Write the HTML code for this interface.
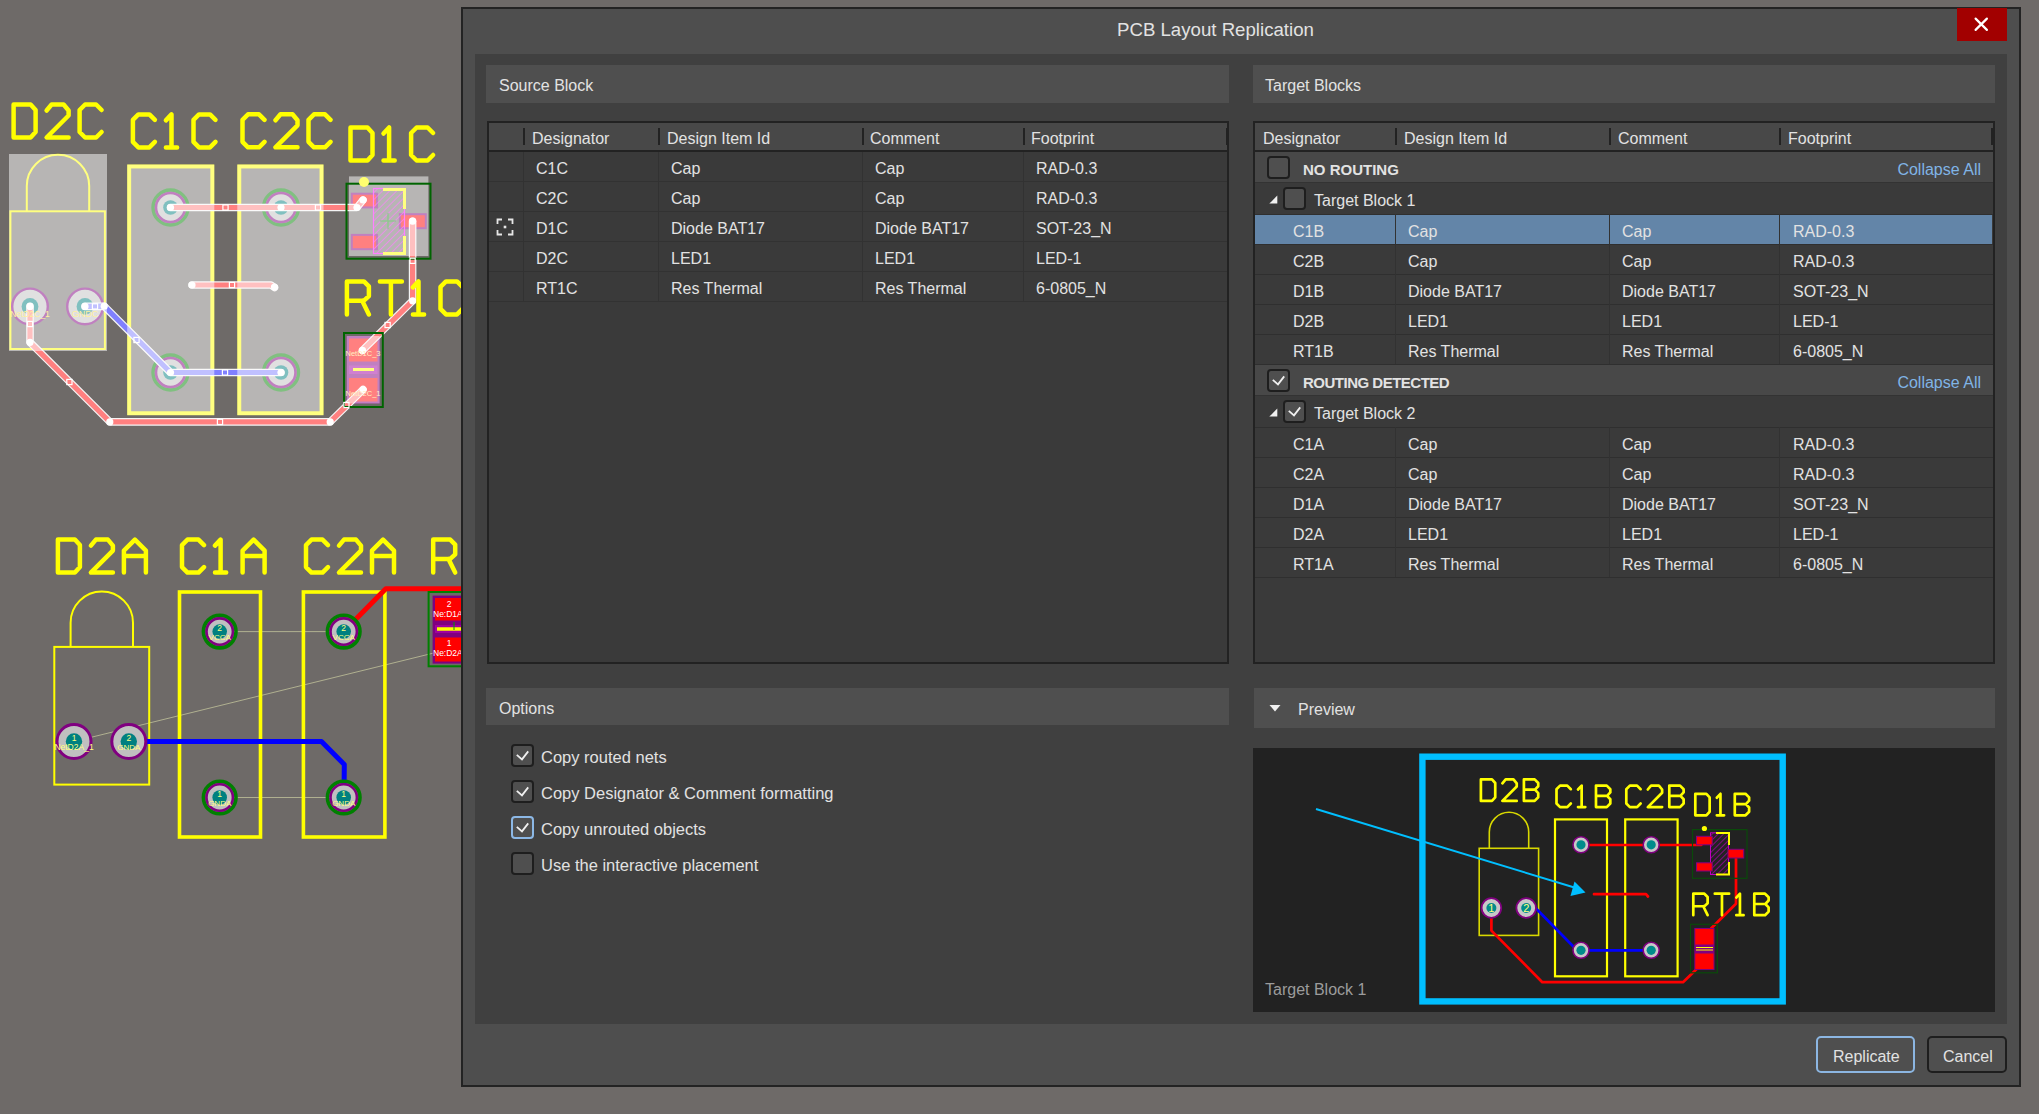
<!DOCTYPE html><html><head><meta charset="utf-8"><style>
*{box-sizing:border-box;margin:0;padding:0}
html,body{width:2039px;height:1114px;overflow:hidden;background:#6e6a68;font-family:"Liberation Sans",sans-serif;color:#e2e2e2}
.a{position:absolute}
.t{position:absolute;white-space:nowrap;font-size:16px;line-height:20px}
.hdr{position:absolute;background:#4f4f4f}
.tbl{position:absolute;background:#3a3a3a;border:2px solid #222}
.cb{position:absolute;width:23px;height:23px;border:2px solid #1e1e1e;border-radius:4px;background:#4f4f4f}
.cb svg{position:absolute;left:-2px;top:-2px}
.btn{position:absolute;height:37px;border:2px solid #1e1e1e;border-radius:5px;background:#4f4f4f}
</style></head><body>
<svg class="a" style="left:0;top:0" width="462" height="1114">
<rect x="10.4" y="211.3" width="94.5" height="137.7" fill="none" stroke="#ffff00" stroke-width="2"/>
<path d="M26.8 211 V186 A31.2 31.2 0 0 1 89.2 186 V211" fill="none" stroke="#ffff00" stroke-width="2"/>
<rect x="129.2" y="166.5" width="83.1" height="246.7" fill="none" stroke="#ffff00" stroke-width="3.9"/>
<rect x="239.3" y="166.5" width="82.2" height="246.7" fill="none" stroke="#ffff00" stroke-width="3.9"/>
<circle cx="30" cy="306.4" r="17.8" fill="#c0c0c0" stroke="#800080" stroke-width="2.4"/><circle cx="30" cy="306.4" r="8.4" fill="#008080"/>
<circle cx="85" cy="306.4" r="17.8" fill="#c0c0c0" stroke="#800080" stroke-width="2.4"/><circle cx="85" cy="306.4" r="8.4" fill="#008080"/>
<circle cx="170.5" cy="207.5" r="17.5" fill="none" stroke="#008000" stroke-width="3.4"/><circle cx="170.5" cy="207.5" r="14.5" fill="#c0c0c0" stroke="#800080" stroke-width="2.6"/><circle cx="170.5" cy="207.5" r="7.3" fill="#008080"/>
<circle cx="170.5" cy="372.5" r="17.5" fill="none" stroke="#008000" stroke-width="3.4"/><circle cx="170.5" cy="372.5" r="14.5" fill="#c0c0c0" stroke="#800080" stroke-width="2.6"/><circle cx="170.5" cy="372.5" r="7.3" fill="#008080"/>
<circle cx="281" cy="207.5" r="17.5" fill="none" stroke="#008000" stroke-width="3.4"/><circle cx="281" cy="207.5" r="14.5" fill="#c0c0c0" stroke="#800080" stroke-width="2.6"/><circle cx="281" cy="207.5" r="7.3" fill="#008080"/>
<circle cx="281" cy="372.5" r="17.5" fill="none" stroke="#008000" stroke-width="3.4"/><circle cx="281" cy="372.5" r="14.5" fill="#c0c0c0" stroke="#800080" stroke-width="2.6"/><circle cx="281" cy="372.5" r="7.3" fill="#008080"/>
<rect x="351.8" y="193.7" width="25.19999999999999" height="13.700000000000017" fill="#ff0000" stroke="#800080" stroke-width="2"/>
<rect x="351.8" y="234.9" width="25.19999999999999" height="14.299999999999983" fill="#ff0000" stroke="#800080" stroke-width="2"/>
<rect x="399.9" y="214.2" width="25.900000000000034" height="14.0" fill="#ff0000" stroke="#800080" stroke-width="2"/>
<defs><pattern id="hatch" width="5" height="5" patternUnits="userSpaceOnUse" patternTransform="rotate(45)"><rect width="5" height="5" fill="none"/><line x1="0" y1="0" x2="0" y2="5" stroke="#ff00ff" stroke-width="1.3"/></pattern><pattern id="hatch2" width="4" height="4" patternUnits="userSpaceOnUse" patternTransform="rotate(45)"><line x1="0" y1="0" x2="0" y2="4" stroke="#c000c0" stroke-width="1.2"/></pattern></defs>
<rect x="373.5" y="188.5" width="31" height="65" fill="url(#hatch)" stroke="#ff00ff" stroke-width="1.2"/>
<path d="M383 189.5 H404.5 V209 M383 253.5 H404.5 V236" fill="none" stroke="#ffff00" stroke-width="3"/>
<path d="M380 221 H396 M388 213 V229" stroke="#00a000" stroke-width="1"/>
<rect x="346.7" y="336" width="33" height="67.5" fill="#800080"/>
<rect x="349" y="338.5" width="28.5" height="23" fill="#ff0000"/>
<rect x="349" y="378" width="28.5" height="23.5" fill="#ff0000"/>
<rect x="349" y="365.5" width="28.5" height="8.5" fill="#a000a0"/>
<path d="M353 369.5 H374" stroke="#ffff00" stroke-width="3"/>
<path d="M170.5 207.5 L357 207.5 L363 200" fill="none" stroke="#f4f4f4" stroke-width="7.6" stroke-linejoin="round" stroke-linecap="round" />
<path d="M192 285 L271 285 L274.5 287.5" fill="none" stroke="#f4f4f4" stroke-width="7.6" stroke-linejoin="round" stroke-linecap="round" />
<path d="M30 306.4 L30 342.3 L109.8 421.9 L330.2 421.9 L363 389.6" fill="none" stroke="#f4f4f4" stroke-width="7.6" stroke-linejoin="round" stroke-linecap="round" />
<path d="M412.6 221.2 L412.6 300.8 L362.5 350.4" fill="none" stroke="#f4f4f4" stroke-width="7.6" stroke-linejoin="round" stroke-linecap="round" />
<path d="M85 306.4 L104.2 306.2 L170.5 372.5 L281 372.5" fill="none" stroke="#f4f4f4" stroke-width="7.6" stroke-linejoin="round" stroke-linecap="round" />
<path d="M170.5 207.5 L357 207.5 L363 200" fill="none" stroke="#ff8080" stroke-width="5.2" stroke-linejoin="round" stroke-linecap="round" />
<path d="M192 285 L271 285 L274.5 287.5" fill="none" stroke="#ff8080" stroke-width="5.2" stroke-linejoin="round" stroke-linecap="round" />
<path d="M30 306.4 L30 342.3 L109.8 421.9 L330.2 421.9 L363 389.6" fill="none" stroke="#ff8080" stroke-width="5.2" stroke-linejoin="round" stroke-linecap="round" />
<path d="M412.6 221.2 L412.6 300.8 L362.5 350.4" fill="none" stroke="#ff8080" stroke-width="5.2" stroke-linejoin="round" stroke-linecap="round" />
<path d="M85 306.4 L104.2 306.2 L170.5 372.5 L281 372.5" fill="none" stroke="#8080ff" stroke-width="5.2" stroke-linejoin="round" stroke-linecap="round" />
<rect x="9" y="154" width="98" height="197" fill="#ffffff" opacity="0.5"/>
<rect x="127.2" y="164.5" width="87.10000000000001" height="250.7" fill="#ffffff" opacity="0.5"/>
<rect x="237.3" y="164.5" width="86.19999999999999" height="250.7" fill="#ffffff" opacity="0.5"/>
<rect x="349" y="176.4" width="79.39999999999998" height="79.6" fill="#ffffff" opacity="0.5"/>
<rect x="346.7" y="336" width="33.0" height="67.5" fill="#ffffff" opacity="0.5"/>
<rect x="346.5" y="183.7" width="84" height="75" fill="none" stroke="#006400" stroke-width="2"/>
<rect x="344" y="333" width="38.8" height="74" fill="none" stroke="#006400" stroke-width="2"/>
<circle cx="364" cy="182" r="5" fill="#ffff70"/>
<circle cx="170.5" cy="207.5" r="3.6" fill="#ffffff"/>
<circle cx="281" cy="207.5" r="3.6" fill="#ffffff"/>
<circle cx="357" cy="207.5" r="3.6" fill="#ffffff"/>
<circle cx="363" cy="200" r="3.6" fill="#ffffff"/>
<circle cx="192" cy="285" r="3.6" fill="#ffffff"/>
<circle cx="274.5" cy="287" r="3.6" fill="#ffffff"/>
<circle cx="30" cy="306.4" r="3.6" fill="#ffffff"/>
<circle cx="30" cy="342.3" r="3.6" fill="#ffffff"/>
<circle cx="109.8" cy="421.9" r="3.6" fill="#ffffff"/>
<circle cx="330.2" cy="421.9" r="3.6" fill="#ffffff"/>
<circle cx="363" cy="389.6" r="3.6" fill="#ffffff"/>
<circle cx="412.6" cy="221.2" r="3.6" fill="#ffffff"/>
<circle cx="412.6" cy="300.8" r="3.6" fill="#ffffff"/>
<circle cx="362.5" cy="350.4" r="3.6" fill="#ffffff"/>
<circle cx="85" cy="306.4" r="3.6" fill="#ffffff"/>
<circle cx="104.2" cy="306.2" r="3.6" fill="#ffffff"/>
<circle cx="170.5" cy="372.5" r="3.6" fill="#ffffff"/>
<circle cx="281" cy="372.5" r="3.6" fill="#ffffff"/>
<rect x="222.9" y="204.9" width="5.2" height="5.2" fill="none" stroke="#ffffff" stroke-width="1.2"/>
<rect x="315.4" y="204.9" width="5.2" height="5.2" fill="none" stroke="#ffffff" stroke-width="1.2"/>
<rect x="229.4" y="282.4" width="5.2" height="5.2" fill="none" stroke="#ffffff" stroke-width="1.2"/>
<rect x="27.4" y="321.4" width="5.2" height="5.2" fill="none" stroke="#ffffff" stroke-width="1.2"/>
<rect x="66.80000000000001" y="379.4" width="5.2" height="5.2" fill="none" stroke="#ffffff" stroke-width="1.2"/>
<rect x="217.4" y="419.29999999999995" width="5.2" height="5.2" fill="none" stroke="#ffffff" stroke-width="1.2"/>
<rect x="343.79999999999995" y="402.4" width="5.2" height="5.2" fill="none" stroke="#ffffff" stroke-width="1.2"/>
<rect x="410.0" y="258.2" width="5.2" height="5.2" fill="none" stroke="#ffffff" stroke-width="1.2"/>
<rect x="385.0" y="322.4" width="5.2" height="5.2" fill="none" stroke="#ffffff" stroke-width="1.2"/>
<rect x="133.9" y="337.4" width="5.2" height="5.2" fill="none" stroke="#ffffff" stroke-width="1.2"/>
<rect x="222.4" y="369.9" width="5.2" height="5.2" fill="none" stroke="#ffffff" stroke-width="1.2"/>
<rect x="92.4" y="303.79999999999995" width="5.2" height="5.2" fill="none" stroke="#ffffff" stroke-width="1.2"/>
<text x="30" y="317" font-family="Liberation Sans" font-size="8.5" fill="#fff0a0" text-anchor="middle">NetD2C_1</text>
<text x="85" y="317" font-family="Liberation Sans" font-size="9" fill="#fff0a0" text-anchor="middle">GNDC</text>
<text x="363" y="356" font-family="Liberation Sans" font-size="7.5" fill="#fff0c0" text-anchor="middle">NetD1C_3</text>
<text x="363" y="396" font-family="Liberation Sans" font-size="7.5" fill="#fff0c0" text-anchor="middle">NetD2C_1</text>
<path d="M 13.60 104.50 H 30.60 L 35.60 110.00 V 132.00 L 30.60 137.50 H 13.60 Z M 46.60 110.50 L 51.60 104.50 H 63.60 L 68.60 110.50 V 115.50 L 46.60 137.50 H 68.60 M 101.60 110.00 L 96.10 104.50 H 85.10 L 79.60 110.00 V 132.00 L 85.10 137.50 H 96.10 L 101.60 132.00" fill="none" stroke="#ffff00" stroke-width="4.5" stroke-linecap="round" stroke-linejoin="round"/>
<path d="M 154.90 119.90 L 149.40 114.40 H 138.40 L 132.90 119.90 V 141.90 L 138.40 147.40 H 149.40 L 154.90 141.90 M 165.90 120.40 L 171.50 114.40 V 147.40 M 165.90 147.40 H 177.10 M 215.50 119.90 L 210.00 114.40 H 199.00 L 193.50 119.90 V 141.90 L 199.00 147.40 H 210.00 L 215.50 141.90" fill="none" stroke="#ffff00" stroke-width="4.5" stroke-linecap="round" stroke-linejoin="round"/>
<path d="M 264.50 119.80 L 259.00 114.30 H 248.00 L 242.50 119.80 V 141.80 L 248.00 147.30 H 259.00 L 264.50 141.80 M 275.50 120.30 L 280.50 114.30 H 292.50 L 297.50 120.30 V 125.30 L 275.50 147.30 H 297.50 M 330.50 119.80 L 325.00 114.30 H 314.00 L 308.50 119.80 V 141.80 L 314.00 147.30 H 325.00 L 330.50 141.80" fill="none" stroke="#ffff00" stroke-width="4.5" stroke-linecap="round" stroke-linejoin="round"/>
<path d="M 350.50 127.50 H 367.50 L 372.50 133.00 V 155.00 L 367.50 160.50 H 350.50 Z M 383.50 133.50 L 389.10 127.50 V 160.50 M 383.50 160.50 H 394.70 M 433.10 133.00 L 427.60 127.50 H 416.60 L 411.10 133.00 V 155.00 L 416.60 160.50 H 427.60 L 433.10 155.00" fill="none" stroke="#ffff00" stroke-width="4.5" stroke-linecap="round" stroke-linejoin="round"/>
<path d="M 346.90 314.40 V 281.40 H 363.90 L 368.90 286.40 V 296.10 L 363.90 300.70 H 346.90 M 362.20 300.70 L 368.90 314.40 M 379.90 281.40 H 401.90 M 390.90 281.40 V 314.40 M 412.90 287.40 L 418.50 281.40 V 314.40 M 412.90 314.40 H 424.10 M 462.50 286.90 L 457.00 281.40 H 446.00 L 440.50 286.90 V 308.90 L 446.00 314.40 H 457.00 L 462.50 308.90" fill="none" stroke="#ffff00" stroke-width="4.5" stroke-linecap="round" stroke-linejoin="round"/>
<path d="M219.7 631.6 H343.7 M219.7 797.5 H343.7 M74 741.5 L450 649" stroke="#b0b090" stroke-width="1" fill="none"/>
<rect x="54.3" y="646.9" width="94.9" height="137.7" fill="none" stroke="#ffff00" stroke-width="2"/>
<path d="M70.6 647 V622.7 A31.2 31.2 0 0 1 133 622.7 V647" fill="none" stroke="#ffff00" stroke-width="2"/>
<rect x="179.5" y="592" width="81" height="245" fill="none" stroke="#ffff00" stroke-width="3.6"/>
<rect x="303.4" y="592" width="81.5" height="245" fill="none" stroke="#ffff00" stroke-width="3.6"/>
<path d="M128.8 741.5 L321.5 741.5 L344.3 764.5 L344 797.5" fill="none" stroke="#0000ff" stroke-width="5" stroke-linejoin="round" stroke-linecap="round" stroke-linecap="butt"/>
<path d="M343.7 631.6 L385.8 588.8 L462 588.8" fill="none" stroke="#ff0000" stroke-width="5" stroke-linejoin="round" stroke-linecap="round" stroke-linecap="butt"/>
<circle cx="74" cy="741.5" r="17" fill="#c0c0c0" stroke="#800080" stroke-width="3"/><circle cx="74" cy="741.5" r="8.2" fill="#008080"/>
<circle cx="128.8" cy="741.5" r="17" fill="#c0c0c0" stroke="#800080" stroke-width="3"/><circle cx="128.8" cy="741.5" r="8.2" fill="#008080"/>
<circle cx="219.7" cy="631.6" r="16.3" fill="none" stroke="#008000" stroke-width="3.6"/><circle cx="219.7" cy="631.6" r="13.2" fill="#c0c0c0" stroke="#800080" stroke-width="2.6"/><circle cx="219.7" cy="631.6" r="7.3" fill="#008080"/>
<circle cx="219.7" cy="797.5" r="16.3" fill="none" stroke="#008000" stroke-width="3.6"/><circle cx="219.7" cy="797.5" r="13.2" fill="#c0c0c0" stroke="#800080" stroke-width="2.6"/><circle cx="219.7" cy="797.5" r="7.3" fill="#008080"/>
<circle cx="343.7" cy="631.6" r="16.3" fill="none" stroke="#008000" stroke-width="3.6"/><circle cx="343.7" cy="631.6" r="13.2" fill="#c0c0c0" stroke="#800080" stroke-width="2.6"/><circle cx="343.7" cy="631.6" r="7.3" fill="#008080"/>
<circle cx="343.7" cy="797.5" r="16.3" fill="none" stroke="#008000" stroke-width="3.6"/><circle cx="343.7" cy="797.5" r="13.2" fill="#c0c0c0" stroke="#800080" stroke-width="2.6"/><circle cx="343.7" cy="797.5" r="7.3" fill="#008080"/>
<rect x="428.6" y="592" width="40" height="74.3" fill="none" stroke="#008000" stroke-width="2"/>
<rect x="432.6" y="595.6" width="33" height="68" fill="#800080"/>
<rect x="435" y="598" width="30" height="22.5" fill="#ff0000"/>
<rect x="435" y="637.5" width="30" height="24" fill="#ff0000"/>
<rect x="435" y="625" width="30" height="8" fill="#a000a0"/>
<path d="M437 629 H465" stroke="#ffff00" stroke-width="3.5"/>
<path d="M454 630 V622" stroke="#00a000" stroke-width="1"/>
<text x="74" y="740.5" font-family="Liberation Sans" font-size="8.5" fill="#ffff80" text-anchor="middle">1</text>
<text x="74" y="749.5" font-family="Liberation Sans" font-size="8.5" fill="#ffff80" text-anchor="middle">NetD2A_1</text>
<text x="128.8" y="740.5" font-family="Liberation Sans" font-size="8.5" fill="#ffff80" text-anchor="middle">2</text>
<text x="128.8" y="749.5" font-family="Liberation Sans" font-size="8" fill="#ffff80" text-anchor="middle">GNDA</text>
<text x="219.7" y="630.6" font-family="Liberation Sans" font-size="8.5" fill="#ffff80" text-anchor="middle">2</text>
<text x="219.7" y="639.6" font-family="Liberation Sans" font-size="8" fill="#ffff80" text-anchor="middle">VCCA</text>
<text x="343.7" y="630.6" font-family="Liberation Sans" font-size="8.5" fill="#ffff80" text-anchor="middle">2</text>
<text x="343.7" y="639.6" font-family="Liberation Sans" font-size="8" fill="#ffff80" text-anchor="middle">VCCA</text>
<text x="219.7" y="796.5" font-family="Liberation Sans" font-size="8.5" fill="#ffff80" text-anchor="middle">1</text>
<text x="219.7" y="805.5" font-family="Liberation Sans" font-size="8" fill="#ffff80" text-anchor="middle">GNDA</text>
<text x="343.7" y="796.5" font-family="Liberation Sans" font-size="8.5" fill="#ffff80" text-anchor="middle">1</text>
<text x="343.7" y="805.5" font-family="Liberation Sans" font-size="8" fill="#ffff80" text-anchor="middle">GNDA</text>
<text x="433" y="617" font-family="Liberation Sans" font-size="8.5" fill="#ffffff" text-anchor="start">Ne:D1A_</text>
<text x="433" y="656" font-family="Liberation Sans" font-size="8.5" fill="#ffffff" text-anchor="start">Ne:D2A_</text>
<text x="449" y="607" font-family="Liberation Sans" font-size="8.5" fill="#ffffff" text-anchor="middle">2</text>
<text x="449" y="646" font-family="Liberation Sans" font-size="8.5" fill="#ffffff" text-anchor="middle">1</text>
<path d="M 57.90 539.60 H 74.90 L 79.90 545.10 V 567.10 L 74.90 572.60 H 57.90 Z M 90.90 545.60 L 95.90 539.60 H 107.90 L 112.90 545.60 V 550.60 L 90.90 572.60 H 112.90 M 123.90 572.60 V 550.60 L 134.90 539.60 L 145.90 550.60 V 572.60 M 123.90 556.10 H 145.90" fill="none" stroke="#ffff00" stroke-width="4.5" stroke-linecap="round" stroke-linejoin="round"/>
<path d="M 204.00 545.10 L 198.50 539.60 H 187.50 L 182.00 545.10 V 567.10 L 187.50 572.60 H 198.50 L 204.00 567.10 M 215.00 545.60 L 220.60 539.60 V 572.60 M 215.00 572.60 H 226.20 M 242.60 572.60 V 550.60 L 253.60 539.60 L 264.60 550.60 V 572.60 M 242.60 556.10 H 264.60" fill="none" stroke="#ffff00" stroke-width="4.5" stroke-linecap="round" stroke-linejoin="round"/>
<path d="M 328.00 545.10 L 322.50 539.60 H 311.50 L 306.00 545.10 V 567.10 L 311.50 572.60 H 322.50 L 328.00 567.10 M 339.00 545.60 L 344.00 539.60 H 356.00 L 361.00 545.60 V 550.60 L 339.00 572.60 H 361.00 M 372.00 572.60 V 550.60 L 383.00 539.60 L 394.00 550.60 V 572.60 M 372.00 556.10 H 394.00" fill="none" stroke="#ffff00" stroke-width="4.5" stroke-linecap="round" stroke-linejoin="round"/>
<path d="M 433.20 572.60 V 539.60 H 450.20 L 455.20 544.60 V 554.30 L 450.20 558.90 H 433.20 M 448.50 558.90 L 455.20 572.60" fill="none" stroke="#ffff00" stroke-width="4.5" stroke-linecap="round" stroke-linejoin="round"/>
</svg>
<div class="a" style="left:461px;top:7px;width:1560px;height:1080px;background:#4e4e4e;border:2px solid #232323"></div>
<div class="t" style="left:1117px;top:19px;font-size:18.65px;line-height:22px">PCB Layout Replication</div>
<div class="a" style="left:1957px;top:8px;width:50px;height:33px;background:#a20000"><svg width="50" height="33" style="position:absolute;left:0;top:0"><path d="M18.6 10.6 L29.9 21.9 M29.9 10.6 L18.6 21.9" stroke="#fff" stroke-width="2.2" stroke-linecap="round"/></svg></div>
<div class="a" style="left:475px;top:54px;width:1532px;height:970px;background:#404040"></div>
<div class="hdr" style="left:486px;top:65px;width:743px;height:38px"></div>
<div class="t" style="left:499px;top:76px">Source Block</div>
<div class="hdr" style="left:1253px;top:65px;width:742px;height:38px"></div>
<div class="t" style="left:1265px;top:76px">Target Blocks</div>
<div class="hdr" style="left:486px;top:688px;width:743px;height:37px"></div>
<div class="t" style="left:499px;top:699px">Options</div>
<div class="hdr" style="left:1254px;top:688px;width:741px;height:40px"></div>
<svg class="a" style="left:1268px;top:703px" width="14" height="10"><path d="M1.5 2 L12.5 2 L7 8.5 Z" fill="#f0f0f0"/></svg>
<div class="t" style="left:1298px;top:700px">Preview</div>
<div class="cb" style="left:511px;top:744px"><svg width="23" height="23"><path d="M5.8 10.8 L11 15.4 L17.2 7.4" fill="none" stroke="#f0f0f0" stroke-width="1.8"/></svg></div>
<div class="t" style="left:541px;top:747px;font-size:16.5px">Copy routed nets</div>
<div class="cb" style="left:511px;top:780px"><svg width="23" height="23"><path d="M5.8 10.8 L11 15.4 L17.2 7.4" fill="none" stroke="#f0f0f0" stroke-width="1.8"/></svg></div>
<div class="t" style="left:541px;top:783px;font-size:16.5px">Copy Designator &amp; Comment formatting</div>
<div class="cb" style="left:511px;top:816px;border-color:#8cb8e6"><svg width="23" height="23"><path d="M5.8 10.8 L11 15.4 L17.2 7.4" fill="none" stroke="#f0f0f0" stroke-width="1.8"/></svg></div>
<div class="t" style="left:541px;top:819px;font-size:16.5px">Copy unrouted objects</div>
<div class="cb" style="left:511px;top:852px"></div>
<div class="t" style="left:541px;top:855px;font-size:16.5px">Use the interactive placement</div>
<div class="btn" style="left:1816px;top:1036px;width:99px;border-color:#8cb6e2"></div>
<div class="t" style="left:1833px;top:1047px">Replicate</div>
<div class="btn" style="left:1927px;top:1036px;width:80px"></div>
<div class="t" style="left:1943px;top:1047px">Cancel</div>
<div class="tbl" style="left:487px;top:121px;width:742px;height:543px"></div>
<div class="a" style="left:489px;top:123px;width:738px;height:27px;background:#484848"></div>
<div class="a" style="left:489px;top:150px;width:738px;height:2px;background:#222"></div>
<div class="a" style="left:523px;top:128px;width:2px;height:17px;background:#222"></div>
<div class="a" style="left:658px;top:128px;width:2px;height:17px;background:#222"></div>
<div class="a" style="left:862px;top:128px;width:2px;height:17px;background:#222"></div>
<div class="a" style="left:1023px;top:128px;width:2px;height:17px;background:#222"></div>
<div class="a" style="left:1226px;top:128px;width:2px;height:17px;background:#222"></div>
<div class="t" style="left:532px;top:129px">Designator</div>
<div class="t" style="left:667px;top:129px">Design Item Id</div>
<div class="t" style="left:870px;top:129px">Comment</div>
<div class="t" style="left:1031px;top:129px">Footprint</div>
<div class="a" style="left:489px;top:181px;width:738px;height:1px;background:#323232"></div>
<div class="t" style="left:536px;top:159px">C1C</div>
<div class="t" style="left:671px;top:159px">Cap</div>
<div class="t" style="left:875px;top:159px">Cap</div>
<div class="t" style="left:1036px;top:159px">RAD-0.3</div>
<div class="a" style="left:489px;top:211px;width:738px;height:1px;background:#323232"></div>
<div class="t" style="left:536px;top:189px">C2C</div>
<div class="t" style="left:671px;top:189px">Cap</div>
<div class="t" style="left:875px;top:189px">Cap</div>
<div class="t" style="left:1036px;top:189px">RAD-0.3</div>
<div class="a" style="left:489px;top:241px;width:738px;height:1px;background:#323232"></div>
<div class="t" style="left:536px;top:219px">D1C</div>
<div class="t" style="left:671px;top:219px">Diode BAT17</div>
<div class="t" style="left:875px;top:219px">Diode BAT17</div>
<div class="t" style="left:1036px;top:219px">SOT-23_N</div>
<div class="a" style="left:489px;top:271px;width:738px;height:1px;background:#323232"></div>
<div class="t" style="left:536px;top:249px">D2C</div>
<div class="t" style="left:671px;top:249px">LED1</div>
<div class="t" style="left:875px;top:249px">LED1</div>
<div class="t" style="left:1036px;top:249px">LED-1</div>
<div class="a" style="left:489px;top:301px;width:738px;height:1px;background:#323232"></div>
<div class="t" style="left:536px;top:279px">RT1C</div>
<div class="t" style="left:671px;top:279px">Res Thermal</div>
<div class="t" style="left:875px;top:279px">Res Thermal</div>
<div class="t" style="left:1036px;top:279px">6-0805_N</div>
<div class="a" style="left:523px;top:152px;width:1px;height:150px;background:#323232"></div>
<div class="a" style="left:658px;top:152px;width:1px;height:150px;background:#323232"></div>
<div class="a" style="left:862px;top:152px;width:1px;height:150px;background:#323232"></div>
<div class="a" style="left:1023px;top:152px;width:1px;height:150px;background:#323232"></div>
<svg class="a" style="left:496px;top:218px" width="18" height="18"><path d="M1.5 6 V1.5 H6 M12 1.5 H16.5 V6 M16.5 12 V16.5 H12 M6 16.5 H1.5 V12" fill="none" stroke="#e6e6e6" stroke-width="1.8"/><rect x="7.7" y="7.7" width="2.6" height="2.6" fill="#e6e6e6"/></svg>
<div class="tbl" style="left:1253px;top:121px;width:742px;height:543px"></div>
<div class="a" style="left:1255px;top:123px;width:738px;height:27px;background:#484848"></div>
<div class="a" style="left:1255px;top:150px;width:738px;height:2px;background:#222"></div>
<div class="a" style="left:1395px;top:128px;width:2px;height:17px;background:#222"></div>
<div class="a" style="left:1609px;top:128px;width:2px;height:17px;background:#222"></div>
<div class="a" style="left:1779px;top:128px;width:2px;height:17px;background:#222"></div>
<div class="a" style="left:1991px;top:128px;width:2px;height:17px;background:#222"></div>
<div class="t" style="left:1263px;top:129px">Designator</div>
<div class="t" style="left:1404px;top:129px">Design Item Id</div>
<div class="t" style="left:1618px;top:129px">Comment</div>
<div class="t" style="left:1788px;top:129px">Footprint</div>
<div class="a" style="left:1255px;top:152px;width:738px;height:30px;background:#484848"></div>
<div class="a" style="left:1255px;top:182px;width:738px;height:1px;background:#333"></div>
<div class="cb" style="left:1267px;top:156px"></div>
<div class="t" style="left:1303px;top:160px;font-size:15px;font-weight:bold">NO ROUTING</div>
<div class="t" style="left:1700px;top:160px;width:281px;text-align:right;color:#80b4e6">Collapse All</div>
<svg class="a" style="left:1268px;top:195px" width="11" height="10"><path d="M1.3 8.6 L9.3 8.6 L9.3 0.6 Z" fill="#f0f0f0"/></svg>
<div class="cb" style="left:1283px;top:187px"></div>
<div class="t" style="left:1314px;top:191px">Target Block 1</div>
<div class="a" style="left:1255px;top:214px;width:738px;height:1px;background:#2f2f2f"></div>
<div class="a" style="left:1255px;top:215px;width:737px;height:29px;background:#6385a8"></div>
<div class="t" style="left:1293px;top:222px">C1B</div>
<div class="t" style="left:1408px;top:222px">Cap</div>
<div class="t" style="left:1622px;top:222px">Cap</div>
<div class="t" style="left:1793px;top:222px">RAD-0.3</div>
<div class="a" style="left:1255px;top:244px;width:738px;height:1px;background:#2f2f2f"></div>
<div class="t" style="left:1293px;top:252px">C2B</div>
<div class="t" style="left:1408px;top:252px">Cap</div>
<div class="t" style="left:1622px;top:252px">Cap</div>
<div class="t" style="left:1793px;top:252px">RAD-0.3</div>
<div class="a" style="left:1255px;top:274px;width:738px;height:1px;background:#2f2f2f"></div>
<div class="t" style="left:1293px;top:282px">D1B</div>
<div class="t" style="left:1408px;top:282px">Diode BAT17</div>
<div class="t" style="left:1622px;top:282px">Diode BAT17</div>
<div class="t" style="left:1793px;top:282px">SOT-23_N</div>
<div class="a" style="left:1255px;top:304px;width:738px;height:1px;background:#2f2f2f"></div>
<div class="t" style="left:1293px;top:312px">D2B</div>
<div class="t" style="left:1408px;top:312px">LED1</div>
<div class="t" style="left:1622px;top:312px">LED1</div>
<div class="t" style="left:1793px;top:312px">LED-1</div>
<div class="a" style="left:1255px;top:334px;width:738px;height:1px;background:#2f2f2f"></div>
<div class="t" style="left:1293px;top:342px">RT1B</div>
<div class="t" style="left:1408px;top:342px">Res Thermal</div>
<div class="t" style="left:1622px;top:342px">Res Thermal</div>
<div class="t" style="left:1793px;top:342px">6-0805_N</div>
<div class="a" style="left:1255px;top:364px;width:738px;height:1px;background:#2f2f2f"></div>
<div class="a" style="left:1395px;top:214px;width:1px;height:150px;background:#323232"></div>
<div class="a" style="left:1609px;top:214px;width:1px;height:150px;background:#323232"></div>
<div class="a" style="left:1779px;top:214px;width:1px;height:150px;background:#323232"></div>
<div class="a" style="left:1255px;top:365px;width:738px;height:30px;background:#484848"></div>
<div class="a" style="left:1255px;top:395px;width:738px;height:1px;background:#333"></div>
<div class="cb" style="left:1267px;top:369px"><svg width="23" height="23"><path d="M5.8 10.8 L11 15.4 L17.2 7.4" fill="none" stroke="#f0f0f0" stroke-width="1.8"/></svg></div>
<div class="t" style="left:1303px;top:373px;font-size:15px;font-weight:bold;letter-spacing:-0.5px">ROUTING DETECTED</div>
<div class="t" style="left:1700px;top:373px;width:281px;text-align:right;color:#80b4e6">Collapse All</div>
<svg class="a" style="left:1268px;top:408px" width="11" height="10"><path d="M1.3 8.6 L9.3 8.6 L9.3 0.6 Z" fill="#f0f0f0"/></svg>
<div class="cb" style="left:1283px;top:400px"><svg width="23" height="23"><path d="M5.8 10.8 L11 15.4 L17.2 7.4" fill="none" stroke="#f0f0f0" stroke-width="1.8"/></svg></div>
<div class="t" style="left:1314px;top:404px">Target Block 2</div>
<div class="a" style="left:1255px;top:427px;width:738px;height:1px;background:#2f2f2f"></div>
<div class="t" style="left:1293px;top:435px">C1A</div>
<div class="t" style="left:1408px;top:435px">Cap</div>
<div class="t" style="left:1622px;top:435px">Cap</div>
<div class="t" style="left:1793px;top:435px">RAD-0.3</div>
<div class="a" style="left:1255px;top:457px;width:738px;height:1px;background:#2f2f2f"></div>
<div class="t" style="left:1293px;top:465px">C2A</div>
<div class="t" style="left:1408px;top:465px">Cap</div>
<div class="t" style="left:1622px;top:465px">Cap</div>
<div class="t" style="left:1793px;top:465px">RAD-0.3</div>
<div class="a" style="left:1255px;top:487px;width:738px;height:1px;background:#2f2f2f"></div>
<div class="t" style="left:1293px;top:495px">D1A</div>
<div class="t" style="left:1408px;top:495px">Diode BAT17</div>
<div class="t" style="left:1622px;top:495px">Diode BAT17</div>
<div class="t" style="left:1793px;top:495px">SOT-23_N</div>
<div class="a" style="left:1255px;top:517px;width:738px;height:1px;background:#2f2f2f"></div>
<div class="t" style="left:1293px;top:525px">D2A</div>
<div class="t" style="left:1408px;top:525px">LED1</div>
<div class="t" style="left:1622px;top:525px">LED1</div>
<div class="t" style="left:1793px;top:525px">LED-1</div>
<div class="a" style="left:1255px;top:547px;width:738px;height:1px;background:#2f2f2f"></div>
<div class="t" style="left:1293px;top:555px">RT1A</div>
<div class="t" style="left:1408px;top:555px">Res Thermal</div>
<div class="t" style="left:1622px;top:555px">Res Thermal</div>
<div class="t" style="left:1793px;top:555px">6-0805_N</div>
<div class="a" style="left:1255px;top:577px;width:738px;height:1px;background:#2f2f2f"></div>
<div class="a" style="left:1395px;top:427px;width:1px;height:150px;background:#323232"></div>
<div class="a" style="left:1609px;top:427px;width:1px;height:150px;background:#323232"></div>
<div class="a" style="left:1779px;top:427px;width:1px;height:150px;background:#323232"></div>
<div class="a" style="left:1253px;top:748px;width:742px;height:264px;background:#222"></div>
<svg class="a" style="left:1253px;top:748px" width="742" height="264">
<g transform="translate(-1253,-748)">
<rect x="1422.4" y="756.7" width="360.3" height="244.7" fill="none" stroke="#00bfff" stroke-width="6.4"/>
<rect x="1479.2" y="848.3" width="59.4" height="87.1" fill="none" stroke="#d8d800" stroke-width="1.6"/>
<path d="M1489.3 848.5 V832 A19.7 19.7 0 0 1 1528.7 832 V848.5" fill="none" stroke="#d8d800" stroke-width="1.6"/>
<rect x="1555" y="819.4" width="52" height="156.9" fill="none" stroke="#ffff00" stroke-width="2.2"/>
<rect x="1625.2" y="819.4" width="52.4" height="156.9" fill="none" stroke="#ffff00" stroke-width="2.2"/>
<path d="M1581 845 L1701 845 L1706 840" fill="none" stroke="#ff0000" stroke-width="2.7" stroke-linejoin="round" stroke-linecap="round" />
<path d="M1594 894.2 L1646 894.2 L1648 896.5" fill="none" stroke="#ff0000" stroke-width="2.7" stroke-linejoin="round" stroke-linecap="round" />
<path d="M1491.4 908 L1491.4 930.6 L1542.3 982.2 L1683 982.2 L1697 968.8" fill="none" stroke="#ff0000" stroke-width="2.7" stroke-linejoin="round" stroke-linecap="round" />
<path d="M1736 853 L1736 903.7 L1711 928.5" fill="none" stroke="#ff0000" stroke-width="2.7" stroke-linejoin="round" stroke-linecap="round" />
<path d="M1526.2 908 L1536 908.5 L1577 950.3 L1651.2 950.3" fill="none" stroke="#0000ff" stroke-width="2.7" stroke-linejoin="round" stroke-linecap="round" />
<circle cx="1491.4" cy="908" r="9.8" fill="#c8c8c8" stroke="#800080" stroke-width="1.8"/><circle cx="1491.4" cy="908" r="5" fill="#008b8b"/>
<circle cx="1526.2" cy="908" r="9.8" fill="#c8c8c8" stroke="#800080" stroke-width="1.8"/><circle cx="1526.2" cy="908" r="5" fill="#008b8b"/>
<circle cx="1581" cy="844.8" r="8" fill="#c8c8c8" stroke="#800080" stroke-width="1.6"/><circle cx="1581" cy="844.8" r="4.6" fill="#008b8b"/>
<circle cx="1581" cy="950.3" r="8" fill="#c8c8c8" stroke="#800080" stroke-width="1.6"/><circle cx="1581" cy="950.3" r="4.6" fill="#008b8b"/>
<circle cx="1651.2" cy="844.8" r="8" fill="#c8c8c8" stroke="#800080" stroke-width="1.6"/><circle cx="1651.2" cy="844.8" r="4.6" fill="#008b8b"/>
<circle cx="1651.2" cy="950.3" r="8" fill="#c8c8c8" stroke="#800080" stroke-width="1.6"/><circle cx="1651.2" cy="950.3" r="4.6" fill="#008b8b"/>
<text x="1491.4" y="912" font-family="Liberation Sans" font-size="11" fill="#ffff80" text-anchor="middle">1</text>
<text x="1526.2" y="912" font-family="Liberation Sans" font-size="11" fill="#ffff80" text-anchor="middle">2</text>
<rect x="1692.5" y="829.6" width="54.5" height="48.7" fill="none" stroke="#0a4a0a" stroke-width="1.2"/>
<rect x="1710.5" y="832.8" width="18" height="41.7" fill="url(#hatch2)" stroke="#c000c0" stroke-width="1"/>
<path d="M1716 833 H1729 V845 M1716 874.5 H1729 V862" fill="none" stroke="#ffff00" stroke-width="2"/>
<rect x="1696.5" y="836.3" width="15.700000000000045" height="8.5" fill="#ff0000" stroke="#800080" stroke-width="1"/>
<rect x="1696.5" y="862.8" width="15.700000000000045" height="8.200000000000045" fill="#ff0000" stroke="#800080" stroke-width="1"/>
<rect x="1728" y="849.3" width="15.700000000000045" height="8.700000000000045" fill="#ff0000" stroke="#800080" stroke-width="1"/>
<circle cx="1704.4" cy="828.5" r="2.6" fill="#ffff00"/>
<rect x="1690.5" y="924.3" width="26.9" height="48.5" fill="none" stroke="#0a4a0a" stroke-width="1.2"/>
<rect x="1694.3" y="928" width="20.2" height="42" fill="#800080"/>
<rect x="1695.3" y="929" width="18.2" height="15.5" fill="#ff0000"/>
<rect x="1695.3" y="953.5" width="18.2" height="15.5" fill="#ff0000"/>
<path d="M1696 947.5 H1713 M1696 950 H1713" stroke="#ffff00" stroke-width="1.2"/>
<path d="M1316 809 L1576 888" stroke="#00bfff" stroke-width="2"/>
<path d="M1585.5 892.5 L1574.5 881.5 L1570.5 896 Z" fill="#00bfff"/>
<path d="M 1480.90 779.40 H 1491.98 L 1495.23 782.98 V 797.32 L 1491.98 800.90 H 1480.90 Z M 1502.40 783.31 L 1505.66 779.40 H 1513.48 L 1516.73 783.31 V 786.57 L 1502.40 800.90 H 1516.73 M 1523.90 800.90 V 779.40 H 1534.65 L 1538.23 782.98 V 786.24 L 1534.98 789.69 H 1523.90 M 1534.98 789.69 L 1538.23 793.08 V 797.32 L 1534.65 800.90 H 1523.90" fill="none" stroke="#ffff00" stroke-width="2.7" stroke-linecap="round" stroke-linejoin="round"/>
<path d="M 1570.83 789.18 L 1567.25 785.60 H 1560.08 L 1556.50 789.18 V 803.52 L 1560.08 807.10 H 1567.25 L 1570.83 803.52 M 1578.00 789.51 L 1581.65 785.60 V 807.10 M 1578.00 807.10 H 1585.30 M 1595.98 807.10 V 785.60 H 1606.73 L 1610.32 789.18 V 792.44 L 1607.06 795.89 H 1595.98 M 1607.06 795.89 L 1610.32 799.28 V 803.52 L 1606.73 807.10 H 1595.98" fill="none" stroke="#ffff00" stroke-width="2.7" stroke-linecap="round" stroke-linejoin="round"/>
<path d="M 1640.63 789.18 L 1637.05 785.60 H 1629.88 L 1626.30 789.18 V 803.52 L 1629.88 807.10 H 1637.05 L 1640.63 803.52 M 1647.80 789.51 L 1651.06 785.60 H 1658.88 L 1662.13 789.51 V 792.77 L 1647.80 807.10 H 1662.13 M 1669.30 807.10 V 785.60 H 1680.05 L 1683.63 789.18 V 792.44 L 1680.38 795.89 H 1669.30 M 1680.38 795.89 L 1683.63 799.28 V 803.52 L 1680.05 807.10 H 1669.30" fill="none" stroke="#ffff00" stroke-width="2.7" stroke-linecap="round" stroke-linejoin="round"/>
<path d="M 1695.30 793.80 H 1706.38 L 1709.63 797.38 V 811.72 L 1706.38 815.30 H 1695.30 Z M 1716.80 797.71 L 1720.45 793.80 V 815.30 M 1716.80 815.30 H 1724.10 M 1734.78 815.30 V 793.80 H 1745.53 L 1749.12 797.38 V 800.64 L 1745.86 804.09 H 1734.78 M 1745.86 804.09 L 1749.12 807.48 V 811.72 L 1745.53 815.30 H 1734.78" fill="none" stroke="#ffff00" stroke-width="2.7" stroke-linecap="round" stroke-linejoin="round"/>
<path d="M 1693.30 915.20 V 893.70 H 1704.38 L 1707.63 896.96 V 903.28 L 1704.38 906.27 H 1693.30 M 1703.27 906.27 L 1707.63 915.20 M 1714.80 893.70 H 1729.13 M 1721.97 893.70 V 915.20 M 1736.30 897.61 L 1739.95 893.70 V 915.20 M 1736.30 915.20 H 1743.60 M 1754.28 915.20 V 893.70 H 1765.03 L 1768.62 897.28 V 900.54 L 1765.36 903.99 H 1754.28 M 1765.36 903.99 L 1768.62 907.38 V 911.62 L 1765.03 915.20 H 1754.28" fill="none" stroke="#ffff00" stroke-width="2.7" stroke-linecap="round" stroke-linejoin="round"/>
</g></svg>
<div class="t" style="left:1265px;top:980px;color:#9c9c9c">Target Block 1</div>
</body></html>
